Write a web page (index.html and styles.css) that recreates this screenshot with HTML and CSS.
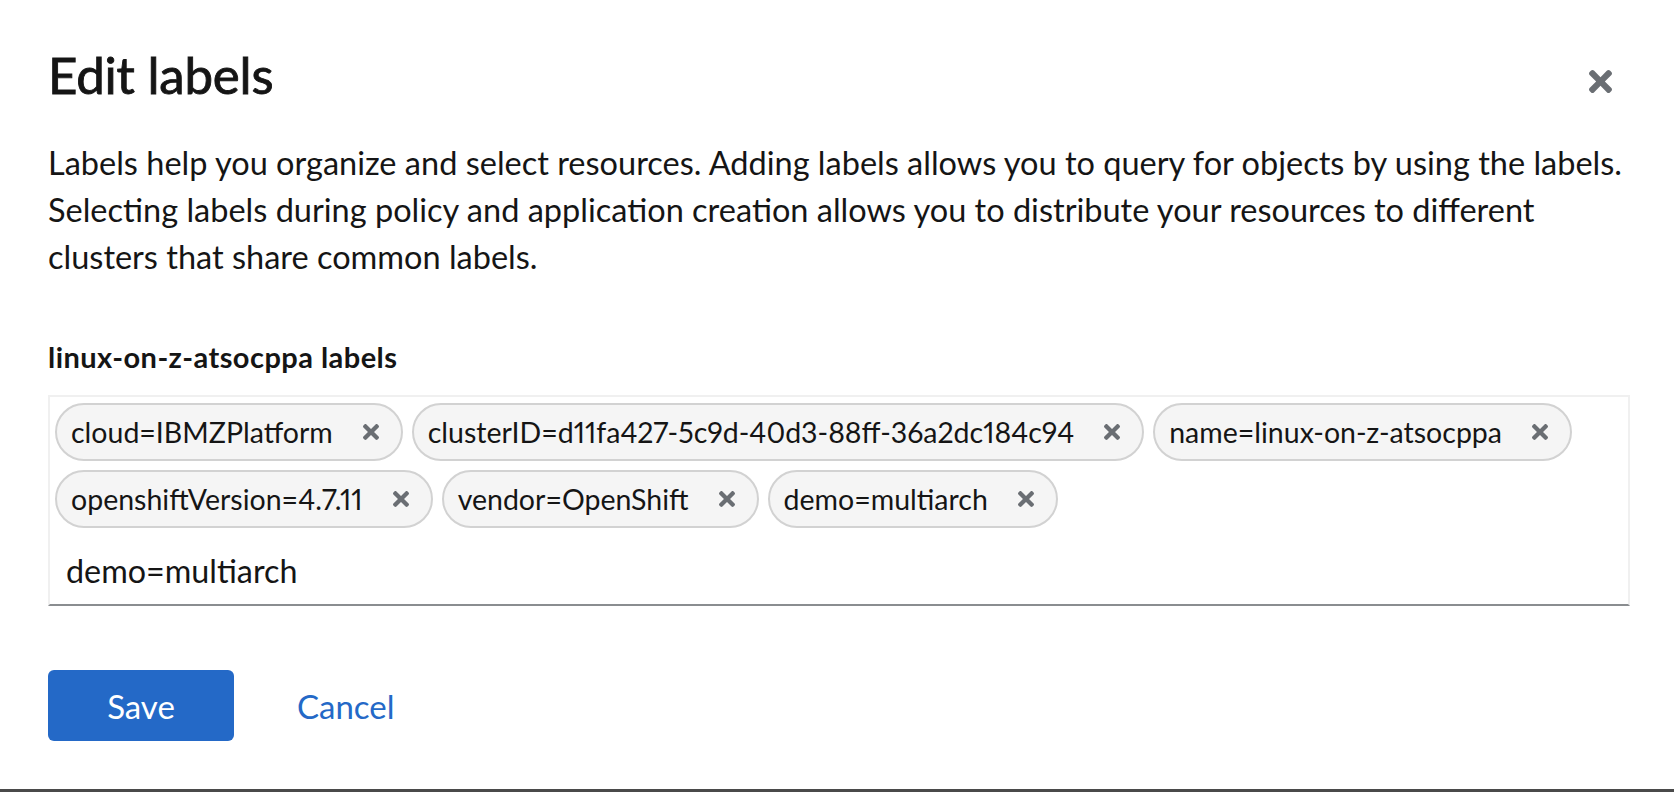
FILE: index.html
```html
<!DOCTYPE html>
<html lang="en">
<head>
<meta charset="utf-8">
<title>Edit labels</title>
<link rel="stylesheet" href="styles.css">
</head>
<body>
<div class="modal">
  <header class="modal-header">
    <h1 class="modal-title">Edit labels</h1>
    <button class="close-btn" aria-label="Close">
      <svg class="icon-times" viewBox="0 80 352 352" aria-hidden="true"><path d="M242.72 256l100.07-100.07c12.28-12.28 12.28-32.19 0-44.48l-22.24-22.24c-12.28-12.28-32.19-12.28-44.48 0L176 189.28 75.93 89.21c-12.28-12.28-32.19-12.28-44.48 0L9.21 111.45c-12.28 12.28-12.28 32.19 0 44.48L109.28 256 9.21 356.07c-12.28 12.28-12.28 32.19 0 44.48l22.24 22.24c12.28 12.28 32.2 12.28 44.48 0L176 322.72l100.07 100.07c12.28 12.28 32.2 12.28 44.48 0l22.24-22.24c12.28-12.28 12.28-32.19 0-44.48L242.72 256z"/></svg>
    </button>
  </header>
  <p class="modal-desc">Labels help you organize and select resources. Adding labels allows you to query for objects by using the labels. Selecting labels during policy and application creation allows you to distribute your resources to different clusters that share common labels.</p>
  <label class="field-label">linux-on-z-atsocppa labels</label>
  <div class="label-input">
    <div class="chips">
      <span class="chip"><span class="chip-text">cloud=IBMZPlatform</span><span class="chip-x"><svg viewBox="0 80 352 352"><path d="M242.72 256l100.07-100.07c12.28-12.28 12.28-32.19 0-44.48l-22.24-22.24c-12.28-12.28-32.19-12.28-44.48 0L176 189.28 75.93 89.21c-12.28-12.28-32.19-12.28-44.48 0L9.21 111.45c-12.28 12.28-12.28 32.19 0 44.48L109.28 256 9.21 356.07c-12.28 12.28-12.28 32.19 0 44.48l22.24 22.24c12.28 12.28 32.2 12.28 44.48 0L176 322.72l100.07 100.07c12.28 12.28 32.2 12.28 44.48 0l22.24-22.24c12.28-12.28 12.28-32.19 0-44.48L242.72 256z"/></svg></span></span>
      <span class="chip"><span class="chip-text">clusterID=d11fa427-5c9d-40d3-88ff-36a2dc184c94</span><span class="chip-x"><svg viewBox="0 80 352 352"><path d="M242.72 256l100.07-100.07c12.28-12.28 12.28-32.19 0-44.48l-22.24-22.24c-12.28-12.28-32.19-12.28-44.48 0L176 189.28 75.93 89.21c-12.28-12.28-32.19-12.28-44.48 0L9.21 111.45c-12.28 12.28-12.28 32.19 0 44.48L109.28 256 9.21 356.07c-12.28 12.28-12.28 32.19 0 44.48l22.24 22.24c12.28 12.28 32.2 12.28 44.48 0L176 322.72l100.07 100.07c12.28 12.28 32.2 12.28 44.48 0l22.24-22.24c12.28-12.28 12.28-32.19 0-44.48L242.72 256z"/></svg></span></span>
      <span class="chip"><span class="chip-text">name=linux-on-z-atsocppa</span><span class="chip-x"><svg viewBox="0 80 352 352"><path d="M242.72 256l100.07-100.07c12.28-12.28 12.28-32.19 0-44.48l-22.24-22.24c-12.28-12.28-32.19-12.28-44.48 0L176 189.28 75.93 89.21c-12.28-12.28-32.19-12.28-44.48 0L9.21 111.45c-12.28 12.28-12.28 32.19 0 44.48L109.28 256 9.21 356.07c-12.28 12.28-12.28 32.19 0 44.48l22.24 22.24c12.28 12.28 32.2 12.28 44.48 0L176 322.72l100.07 100.07c12.28 12.28 32.2 12.28 44.48 0l22.24-22.24c12.28-12.28 12.28-32.19 0-44.48L242.72 256z"/></svg></span></span>
      <span class="chip"><span class="chip-text">openshiftVersion=4.7.11</span><span class="chip-x"><svg viewBox="0 80 352 352"><path d="M242.72 256l100.07-100.07c12.28-12.28 12.28-32.19 0-44.48l-22.24-22.24c-12.28-12.28-32.19-12.28-44.48 0L176 189.28 75.93 89.21c-12.28-12.28-32.19-12.28-44.48 0L9.21 111.45c-12.28 12.28-12.28 32.19 0 44.48L109.28 256 9.21 356.07c-12.28 12.28-12.28 32.19 0 44.48l22.24 22.24c12.28 12.28 32.2 12.28 44.48 0L176 322.72l100.07 100.07c12.28 12.28 32.2 12.28 44.48 0l22.24-22.24c12.28-12.28 12.28-32.19 0-44.48L242.72 256z"/></svg></span></span>
      <span class="chip"><span class="chip-text">vendor=OpenShift</span><span class="chip-x"><svg viewBox="0 80 352 352"><path d="M242.72 256l100.07-100.07c12.28-12.28 12.28-32.19 0-44.48l-22.24-22.24c-12.28-12.28-32.19-12.28-44.48 0L176 189.28 75.93 89.21c-12.28-12.28-32.19-12.28-44.48 0L9.21 111.45c-12.28 12.28-12.28 32.19 0 44.48L109.28 256 9.21 356.07c-12.28 12.28-12.28 32.19 0 44.48l22.24 22.24c12.28 12.28 32.2 12.28 44.48 0L176 322.72l100.07 100.07c12.28 12.28 32.2 12.28 44.48 0l22.24-22.24c12.28-12.28 12.28-32.19 0-44.48L242.72 256z"/></svg></span></span>
      <span class="chip"><span class="chip-text">demo=multiarch</span><span class="chip-x"><svg viewBox="0 80 352 352"><path d="M242.72 256l100.07-100.07c12.28-12.28 12.28-32.19 0-44.48l-22.24-22.24c-12.28-12.28-32.19-12.28-44.48 0L176 189.28 75.93 89.21c-12.28-12.28-32.19-12.28-44.48 0L9.21 111.45c-12.28 12.28-12.28 32.19 0 44.48L109.28 256 9.21 356.07c-12.28 12.28-12.28 32.19 0 44.48l22.24 22.24c12.28 12.28 32.2 12.28 44.48 0L176 322.72l100.07 100.07c12.28 12.28 32.2 12.28 44.48 0l22.24-22.24c12.28-12.28 12.28-32.19 0-44.48L242.72 256z"/></svg></span></span>
    </div>
    <div class="typed">demo=multiarch</div>
  </div>
  <footer class="modal-footer">
    <button class="btn-primary">Save</button>
    <button class="btn-link">Cancel</button>
  </footer>
</div>
<div class="page-edge"></div>
</body>
</html>
```

FILE: styles.css
```css
html, body {
  margin: 0;
  padding: 0;
  background: #ffffff;
}
body {
  height: 792px;
  display: flex;
  flex-direction: column;
  font-family: Lato, "Noto Sans", sans-serif;
  color: #151515;
  overflow: hidden;
}
.modal {
  flex: 1;
  padding: 0 44px 0 48px;
}
.modal-header {
  display: flex;
  justify-content: space-between;
  align-items: center;
  padding-top: 44px;
  padding-right: 18px;
}
.modal-title {
  margin: 0;
  font-size: 51px;
  font-weight: 400;
  line-height: 1.2;
  letter-spacing: -0.2px;
  -webkit-text-stroke: 0.9px #151515;
}
.close-btn {
  background: none;
  border: 0;
  padding: 0;
  margin-top: 14px;
  display: flex;
  cursor: pointer;
}
.icon-times {
  width: 23px;
  height: 23px;
  fill: #6a6e73;
}
.modal-desc {
  margin: 34px 0 0;
  font-size: 32.5px;
  line-height: 47px;
}
.field-label {
  display: block;
  margin-top: 57px;
  font-size: 29px;
  font-weight: 700;
  line-height: 40px;
  letter-spacing: 0.45px;
}
.label-input {
  margin-top: 18px;
  border: 2px solid #f0f0f0;
  border-bottom: 2px solid #8a8d90;
  padding: 6px 5px 0 5px;
}
.chips {
  display: flex;
  flex-wrap: wrap;
  gap: 9px 9px;
}
.chip {
  display: inline-flex;
  align-items: center;
  height: 58px;
  box-sizing: border-box;
  border: 2px solid #d2d2d2;
  border-radius: 30px;
  background: #f5f5f5;
  padding: 0 22px 0 14px;
  font-size: 28.5px;
  font-variant-numeric: proportional-nums;
}
.chip-text {
  white-space: nowrap;
}
.chip-x {
  display: flex;
  margin-left: 30px;
}
.chip-x svg {
  width: 16px;
  height: 16px;
  fill: #6a6e73;
}
.typed {
  height: 67px;
  margin-top: 9px;
  display: flex;
  align-items: center;
  padding-left: 11px;
  font-size: 32.3px;
}
.modal-footer {
  display: flex;
  align-items: center;
  margin-top: 64px;
  gap: 32px;
}
.btn-primary {
  width: 186px;
  height: 71px;
  border: 0;
  border-radius: 6px;
  background: #2469c7;
  color: #ffffff;
  font-family: inherit;
  font-size: 33px;
}
.btn-link {
  border: 0;
  background: none;
  color: #2469c7;
  font-family: inherit;
  font-size: 33px;
  padding: 0 31px;
}
.page-edge {
  height: 3px;
  background: #4a4a4a;
}
```
